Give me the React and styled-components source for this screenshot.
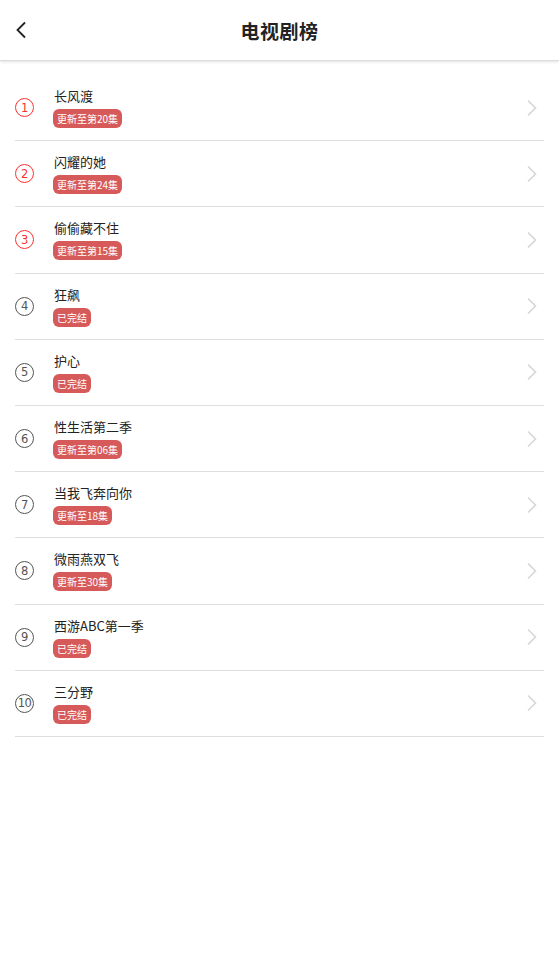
import React from "react";
import styled, { createGlobalStyle } from "styled-components";

const GlobalStyle = createGlobalStyle`
  html, body {
    margin: 0;
    padding: 0;
    background: #fff;
    font-family: "Noto Sans CJK SC", "Noto Sans", sans-serif;
  }
  * {
    box-sizing: border-box;
  }
`;

const shows = [
  { name: "长风渡", status: "更新至第20集" },
  { name: "闪耀的她", status: "更新至第24集" },
  { name: "偷偷藏不住", status: "更新至第15集" },
  { name: "狂飙", status: "已完结" },
  { name: "护心", status: "已完结" },
  { name: "性生活第二季", status: "更新至第06集" },
  { name: "当我飞奔向你", status: "更新至18集" },
  { name: "微雨燕双飞", status: "更新至30集" },
  { name: "西游ABC第一季", status: "已完结" },
  { name: "三分野", status: "已完结" },
];

export default function App() {
  return (
    <Page>
      <GlobalStyle />
      <Header>
        <BackButton>
          <svg width="12" height="18" viewBox="0 0 12 18">
            <path d="M10 1.5 L2.5 9 L10 16.5" fill="none" stroke="#222" strokeWidth="1.8" />
          </svg>
        </BackButton>
        <Title>电视剧榜</Title>
      </Header>
      <List>
        {shows.map((show, index) => (
          <Row key={show.name}>
            <Rank top={index < 3}>{index + 1}</Rank>
            <Info>
              <Name>{show.name}</Name>
              <Badge>{show.status}</Badge>
            </Info>
            <svg width="12" height="18" viewBox="0 0 12 18">
              <path d="M2 1.5 L9.5 9 L2 16.5" fill="none" stroke="#d6d6d6" strokeWidth="1.6" />
            </svg>
          </Row>
        ))}
      </List>
    </Page>
  );
}

const Page = styled.div`
  width: 559px;
  min-height: 976px;
  background: #fff;
`;

const Header = styled.div`
  height: 61px;
  display: flex;
  align-items: center;
  justify-content: center;
  position: relative;
  border-bottom: 1px solid #dcdcdc;
  box-shadow: 0 1px 3px rgb(0 0 0 / 12%);
`;

const BackButton = styled.div`
  position: absolute;
  left: 15px;
  top: 21px;
  display: flex;
`;

const Title = styled.h1`
  margin: 0;
  font-size: 19px;
  font-weight: 700;
  color: #222;
  letter-spacing: 0.5px;
`;

const List = styled.div`
  padding: 14px 15px 0;
`;

const Row = styled.div`
  height: 66.2px;
  display: flex;
  align-items: center;
  border-bottom: 1px solid #dedede;
  padding-right: 6px;
`;

const Rank = styled.span`
  width: 19px;
  height: 19px;
  border-radius: 50%;
  border: 1px solid ${({ top }) => (top ? "#ff3030" : "#555")};
  color: ${({ top }) => (top ? "#ff3030" : "#555")};
  display: flex;
  align-items: center;
  justify-content: center;
  font-family: "DejaVu Sans", sans-serif;
  font-size: 11.5px;
  letter-spacing: -0.5px;
  margin-right: 19px;
  flex-shrink: 0;
`;

const Info = styled.div`
  flex: 1;
  display: flex;
  flex-direction: column;
  align-items: flex-start;
  gap: 4px;
`;

const Name = styled.div`
  font-size: 13px;
  line-height: 18px;
  color: #222;
  padding-left: 1px;
`;

const Badge = styled.span`
  background: #d65a5a;
  color: #fff;
  font-size: 10px;
  line-height: 19px;
  height: 19px;
  padding: 0 4px;
  border-radius: 6px;
`;
